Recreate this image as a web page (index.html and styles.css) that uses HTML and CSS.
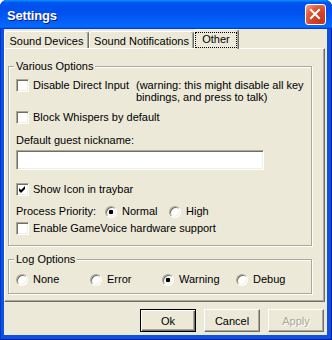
FILE: index.html
```html
<!DOCTYPE html>
<html>
<head>
<meta charset="utf-8">
<title>Settings</title>
<link rel="stylesheet" href="styles.css">
</head>
<body>
<div class="window">
  <div class="titlebar">
    <span class="title">Settings</span>
    <span class="close"><svg width="21" height="21" viewBox="0 0 21 21"><path d="M6 6 L14 14 M14 6 L6 14" stroke="#fff" stroke-width="2" stroke-linecap="square"/></svg></span>
  </div>
  <div class="client">
    <div class="tabs">
      <div class="tab tab-devices">Sound Devices</div>
      <div class="tab tab-notif">Sound Notifications</div>
      <div class="tab tab-other active"><span class="focus">Other</span></div>
    </div>
    <div class="panel">
      <fieldset class="group group-various">
        <legend>Various Options</legend>
        <div class="row-direct">
          <div class="opt opt-direct"><span class="cb"></span><span>Disable Direct Input</span></div>
          <div class="warning">(warning: this might disable all key<br>bindings, and press to talk)</div>
        </div>
        <div class="opt row-whisper"><span class="cb"></span><span>Block Whispers by default</span></div>
        <div class="field-label">Default guest nickname:</div>
        <input class="textbox" type="text" value="">
        <div class="opt row-tray"><span class="cb checked"><svg width="7" height="7" viewBox="0 0 7 7"><path d="M0 2 L2 4 L6 0 L6 3 L2 7 L0 5 Z" fill="#000"/></svg></span><span>Show Icon in traybar</span></div>
        <div class="opt row-priority">
          <span class="prio-label">Process Priority:</span>
          <span class="radio-item prio-normal"><span class="rb on"></span><span>Normal</span></span>
          <span class="radio-item"><span class="rb"></span><span>High</span></span>
        </div>
        <div class="opt row-gamevoice"><span class="cb"></span><span>Enable GameVoice hardware support</span></div>
      </fieldset>
      <fieldset class="group group-log">
        <legend>Log Options</legend>
        <div class="log-grid">
          <span class="radio-item"><span class="rb"></span><span>None</span></span>
          <span class="radio-item"><span class="rb"></span><span>Error</span></span>
          <span class="radio-item"><span class="rb on"></span><span>Warning</span></span>
          <span class="radio-item"><span class="rb"></span><span>Debug</span></span>
        </div>
      </fieldset>
    </div>
    <div class="buttons">
      <button class="btn default" type="button">Ok</button>
      <button class="btn" type="button">Cancel</button>
      <button class="btn disabled" type="button">Apply</button>
    </div>
  </div>
</div>
</body>
</html>
```
FILE: styles.css
```css
* { box-sizing: border-box; }
html, body { margin: 0; padding: 0; background: #fff; }
body {
  width: 332px;
  height: 340px;
  overflow: hidden;
  font-family: "Liberation Sans", Arial, sans-serif;
  font-size: 11px;
  color: #000;
}
.window {
  width: 332px;
  height: 340px;
  display: flex;
  flex-direction: column;
  background: #0b52e3;
  border-radius: 7px 7px 0 0;
  overflow: hidden;
  box-shadow: inset 1px 0 0 #0836c4, inset -1px 0 0 #00179a, inset 0 -1px 0 #00179a;
}
.titlebar {
  height: 29px;
  flex: none;
  display: flex;
  align-items: center;
  justify-content: space-between;
  padding: 0 6px 0 7px;
  background: linear-gradient(180deg, #0997ff 0%, #0053ee 9%, #0050ee 40%, #0466fb 86%, #0668fe 92%, #005bff 95%, #003dd7 97%, #003dd7 100%);
}
.title {
  color: #fff;
  font-weight: bold;
  font-size: 13px;
  letter-spacing: -0.2px;
  text-shadow: 1px 1px 0 #0a1a8a;
  padding-top: 1px;
}
.close {
  width: 21px;
  height: 21px;
  border: 1px solid #fff;
  border-radius: 3px;
  display: flex;
  align-items: center;
  justify-content: center;
  background: radial-gradient(circle at 80% 85%, #c2361c 0%, #d4462a 45%, #e05a3e 65%, #ef8c74 88%, #f8c0b0 100%);
}
.close svg { display: block; margin: -1px; }
.client {
  flex: 1;
  margin: 0 5px 5px 4px;
  padding: 0 2px 3px 0;
  background: #ece9d8;
  display: flex;
  flex-direction: column;
}
.tabs {
  height: 19px;
  display: flex;
  align-items: flex-end;
  position: relative;
  z-index: 1;
}
.tab {
  height: 17px;
  padding-top: 3px;
  line-height: 13px;
  text-align: center;
  border-top: 1px solid #fff;
  border-left: 1px solid #fff;
  border-right: 1px solid #716f64;
  border-radius: 3px 3px 0 0;
  box-shadow: inset -1px 0 0 #aca899;
  background: #ece9d8;
}
.tab-devices { width: 85px; }
.tab-notif { width: 105px; }
.tab-other { width: 45px; }
.tab.active {
  height: 20px;
  margin-bottom: -1px;
  padding: 2px 0 0 0;
}
.focus {
  display: block;
  height: 16px;
  margin: 0 1px 0 0;
  border: 1px dotted #000;
  line-height: 13px;
}
.panel {
  flex: 1;
  border-top: 1px solid #fff;
  border-left: 1px solid #fff;
  border-right: 1px solid #716f64;
  border-bottom: 1px solid #716f64;
  box-shadow: inset -1px -1px 0 #aca899;
  padding: 11px 0 0 3px;
}
.group {
  width: 304px;
  margin: 0;
  border: 1px solid #aca899;
  box-shadow: inset 1px 1px 0 #fff, 1px 1px 0 #fff;
  padding: 0 7px;
}
.group legend {
  line-height: 13px;
  padding: 0 2px;
  margin-left: -2px;
  background: #ece9d8;
}
.group-various { padding-top: 6px; padding-bottom: 10px; }
.group-log { margin-top: 7px; padding-top: 7px; padding-bottom: 7px; }
.row-direct {
  display: flex;
  align-items: flex-start;
}
.opt {
  display: flex;
  align-items: center;
  gap: 4px;
  height: 13px;
  line-height: 13px;
  white-space: nowrap;
}
.opt-direct { width: 120px; height: 12px; line-height: 12px; }
.warning { line-height: 12px; white-space: nowrap; }
.row-whisper { margin-top: 8px; }
.field-label { margin-top: 10px; line-height: 13px; }
.textbox {
  display: block;
  margin: 3px 0 0 0;
  width: 248px;
  height: 20px;
  padding: 0 3px;
  background: #fff;
  border: 1px solid;
  border-color: #aca899 #fff #fff #aca899;
  box-shadow: inset 1px 1px 0 #716f64, inset -1px -1px 0 #f1efe2;
  font: inherit;
  outline: none;
}
.row-tray { margin-top: 13px; }
.row-priority { margin-top: 9px; gap: 0; }
.row-gamevoice { margin-top: 4px; }
.prio-label { width: 89px; }
.prio-normal { width: 64px; }
.cb {
  flex: none;
  width: 13px;
  height: 13px;
  background: #fff;
  border: 1px solid;
  border-color: #aca899 #fff #fff #aca899;
  box-shadow: inset 1px 1px 0 #716f64, inset -1px -1px 0 #f1efe2;
  display: flex;
  align-items: center;
  justify-content: center;
}
.cb svg { display: block; }
.radio-item {
  display: flex;
  align-items: center;
  gap: 5px;
  height: 13px;
  line-height: 13px;
}
.rb {
  flex: none;
  width: 12px;
  height: 12px;
  border-radius: 50%;
  background: #fff;
  border: 1px solid;
  border-color: #aca899 #fff #fff #aca899;
  box-shadow: inset 1px 1px 0 #716f64, inset -1px -1px 0 #f1efe2;
}
.rb.on {
  background: radial-gradient(circle at 50% 50%, #000 0, #000 2px, #fff 2.6px);
}
.log-grid {
  display: grid;
  grid-template-columns: 74px 72px 74px auto;
  height: 13px;
}
.buttons {
  display: flex;
  justify-content: flex-end;
  gap: 8px;
  margin: 7px 1px 0 0;
}
.btn {
  width: 56px;
  height: 23px;
  padding: 0;
  font: inherit;
  color: #000;
  background: #ece9d8;
  border: 1px solid;
  border-color: #fff #716f64 #716f64 #fff;
  box-shadow: inset -1px -1px 0 #aca899;
  border-radius: 0;
}
.btn.default {
  border: 1px solid #000;
  box-shadow: inset 1px 1px 0 #fff, inset -1px -1px 0 #716f64, inset -2px -2px 0 #aca899;
}
.btn.disabled {
  color: #aca899;
  text-shadow: 1px 1px 0 #fff;
}
```
